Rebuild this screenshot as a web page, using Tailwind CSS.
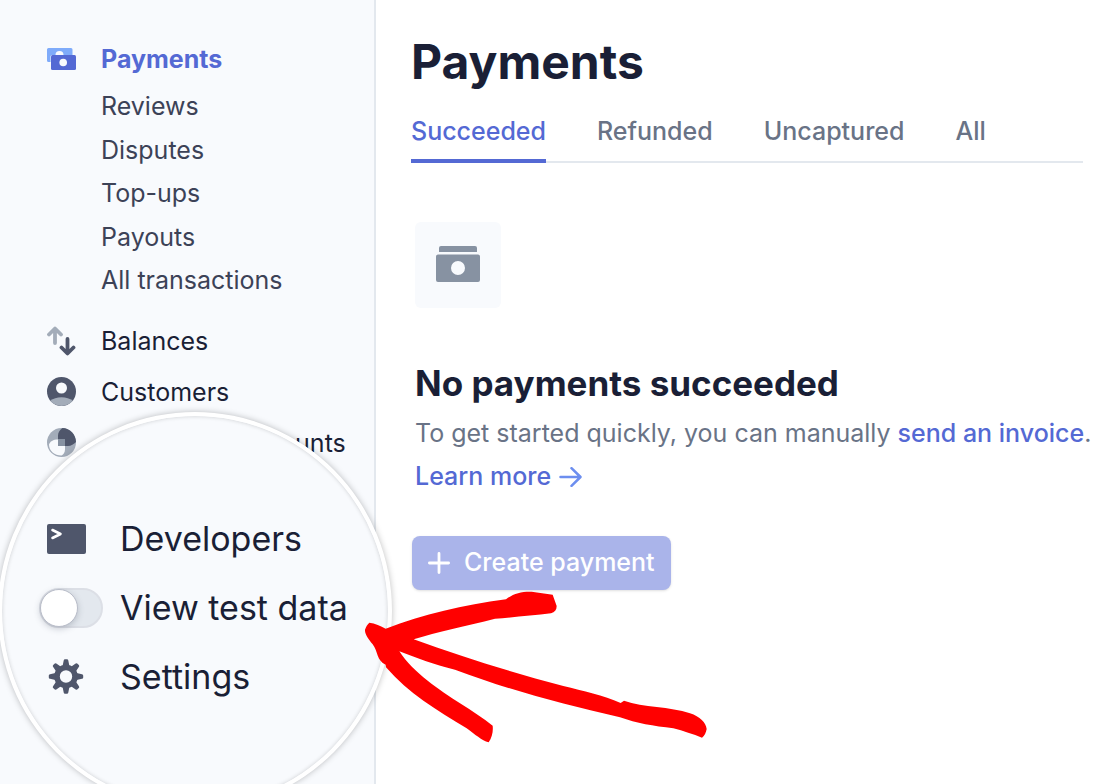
<!DOCTYPE html>
<html lang="en">
<head>
<meta charset="utf-8">
<meta name="viewport" content="width=device-width, initial-scale=1">
<title>Payments</title>
<script src="https://cdn.jsdelivr.net/npm/@tailwindcss/browser@4"></script>
</head>
<body class="relative flex min-h-screen overflow-hidden bg-white font-['Inter',sans-serif] text-[25px] text-[#1a1f36]">

<aside class="w-[376px] shrink-0 border-r-2 border-[#e3e8ee] bg-[#f8fafd] pt-[33px] pl-[47px]">
  <nav aria-label="Main">
    <a href="#" class="flex h-[52px] items-center gap-6 font-bold text-[#5469d4]">
      <svg class="h-[29px] w-[30px]" viewBox="0 0 30 29" aria-hidden="true">
        <path fill="#7fabfa" d="M1.500 3H24a1.500 1.500 0 0 1 1.500 1.500V10H5a1.500 1.500 0 0 0-1.500 1.500V17h-2A1.500 1.500 0 0 1 0 15.500v-11A1.500 1.500 0 0 1 1.500 3z"/>
        <path fill="#f8fafd" d="M8.500 10a4 4 0 0 1 8 0z"/>
        <rect x="4" y="10" width="25" height="15" rx="1.500" fill="#5469d4"/>
        <circle cx="16.200" cy="17.500" r="3.800" fill="#f8fafd"/>
      </svg>
      <span class="pt-[2px]">Payments</span>
    </a>
    <div class="grid h-[218px] grid-rows-5 items-center pl-[54px] text-[#3c4257]">
      <a href="#">Reviews</a>
      <a href="#">Disputes</a>
      <a href="#">Top-ups</a>
      <a href="#">Payouts</a>
      <a href="#">All transactions</a>
    </div>
    <div class="mt-3 flex flex-col">
      <a href="#" class="flex h-[51px] items-center gap-6">
        <svg class="h-[30px] w-[30px]" viewBox="0 0 30 30" fill="none" stroke-width="3.800" stroke-linecap="round" stroke-linejoin="round" aria-hidden="true">
          <path stroke="#a3acb9" d="M8 17V3M2 8.500l6-6 6 6"/>
          <path stroke="#4f566b" d="M20.500 13v14M14.500 21.500l6 6 6-6"/>
        </svg>
        <span class="pt-[2px]">Balances</span>
      </a>
      <a href="#" class="flex h-[51px] items-center gap-6">
        <svg class="h-[30px] w-[30px]" viewBox="0 0 30 30" aria-hidden="true">
          <circle cx="14.500" cy="14.500" r="14.500" fill="#4f566b"/>
          <path fill="#a3acb9" d="M3.300 23.700C6 21.500 10 20.300 14.500 20.300S23 21.500 25.700 23.700A14.500 14.500 0 0 1 3.300 23.700z"/>
          <circle cx="14.500" cy="11" r="5.500" fill="#f8fafd"/>
        </svg>
        <span class="pt-[2px]">Customers</span>
      </a>
      <a href="#" class="flex h-[51px] items-center gap-6">
        <svg class="h-[30px] w-[30px]" viewBox="0 0 30 30" aria-hidden="true">
          <circle cx="14.500" cy="14.500" r="14.500" fill="#a3acb9"/>
          <path fill="#4f566b" d="M11 11V7.500c0-3 2-6 4.500-7.500C23 0 29 6.500 29 14c-2 2-5 4-8 4h-3v-7z"/>
          <path fill="#f8fafd" d="M2 16.500c1-3 4-5 9-5V18h7v3.500c0 3-2 5.500-3.500 6C7.500 27.500 2 23 2 16.500z"/>
          <path fill="#8792a2" d="M11 11h7v7h-7z"/>
        </svg>
        <span class="pt-[2px]">Connected accounts</span>
      </a>
    </div>
  </nav>
</aside>

<main class="min-w-0 flex-1 pt-8 pr-[33px] pl-[35px]">
  <h1 class="text-[48px] leading-[60px] font-bold">Payments</h1>
  <div role="tablist" class="mt-3 flex gap-[51px] border-b-2 border-[#e3e8ee] font-medium text-[#697386]">
    <button type="button" role="tab" aria-selected="true" class="-mb-[2px] h-[59px] border-b-4 border-[#5469d4] text-[#5469d4]">Succeeded</button>
    <button type="button" role="tab" aria-selected="false" class="-mb-[2px] h-[59px] border-b-4 border-transparent">Refunded</button>
    <button type="button" role="tab" aria-selected="false" class="-mb-[2px] h-[59px] border-b-4 border-transparent">Uncaptured</button>
    <button type="button" role="tab" aria-selected="false" class="-mb-[2px] h-[59px] border-b-4 border-transparent">All</button>
  </div>

  <section class="mt-[59px] pl-1">
    <div class="flex size-[86px] items-center justify-center rounded-md bg-[#f8fafd] pb-[2px]">
      <svg class="h-9 w-11" viewBox="0 0 44 36" fill="#8792a2" aria-hidden="true">
        <path d="M5 0h34a2 2 0 0 1 2 2v4H3V2a2 2 0 0 1 2-2z"/>
        <path fill-rule="evenodd" d="M2 8.500h40a2 2 0 0 1 2 2V34a2 2 0 0 1-2 2H2a2 2 0 0 1-2-2V10.500a2 2 0 0 1 2-2zM22 15a7 7 0 1 0 0 14 7 7 0 0 0 0-14z"/>
      </svg>
    </div>
    <h2 class="mt-[54px] text-[35px] leading-[42px] font-bold">No payments succeeded</h2>
    <p class="mt-2 leading-[43px] whitespace-nowrap text-[#697386]">To get started quickly, you can manually <a href="#" class="font-medium text-[#5469d4]">send an invoice</a>.</p>
    <a href="#" class="inline-flex items-center gap-2 leading-[43px] font-medium text-[#5469d4]">Learn more
      <svg class="h-5 w-[23px]" viewBox="0 0 23 20" fill="none" stroke="#6c8eef" stroke-width="2.500" stroke-linecap="round" stroke-linejoin="round" aria-hidden="true"><path d="M1.500 10H21M12.500 1.200l9 8.800-9 8.800"/></svg>
    </a>
  </section>
  <button type="button" class="mt-[38px] ml-px flex h-[54px] items-center gap-[14px] rounded-lg bg-[#aab4ea] px-4 font-medium text-white shadow-sm">
    <svg class="size-[22px]" viewBox="0 0 22 22" fill="none" stroke="currentColor" stroke-width="2.800" stroke-linecap="round" aria-hidden="true"><path d="M11 1.400v19.200M1.400 11h19.200"/></svg>
    Create payment
  </button>
</main>

<!-- Magnifier over the lower part of the sidebar -->
<div class="absolute top-[412px] -left-[2px] flex h-[398px] w-[394px] flex-col rounded-[50%] border-4 border-white bg-[#f8fafd] pt-[88px] pl-[37px] text-[34px] shadow-[0_0_6px_rgba(0,0,0,0.25),inset_0_0_4px_rgba(0,0,0,0.18)]">
  <a href="#" class="flex h-[69px] items-center gap-[17px]">
    <svg class="h-[30px] w-[64px]" viewBox="0 0 64 30" aria-hidden="true">
      <rect x="8" y="0" width="39" height="30" rx="2" fill="#4f566b"/>
      <path d="M13.500 6l8 4-8 4" fill="none" stroke="#fff" stroke-width="2.600" stroke-linecap="round" stroke-linejoin="round"/>
    </svg>
    Developers
  </a>
  <label class="flex h-[69px] items-center gap-[17px]">
    <input type="checkbox" role="switch" class="flex h-10 w-16 appearance-none items-center rounded-full border-2 border-[#dcdfe6] bg-[#e3e8ee] before:-ml-px before:size-[38px] before:rounded-full before:border before:border-[#b9bdc9] before:bg-white before:shadow-[0_2px_6px_rgba(60,66,87,0.25)]">
    View test data
  </label>
  <a href="#" class="flex h-[69px] items-center gap-[17px]">
    <svg class="h-[36px] w-[64px]" viewBox="0 0 64 36" aria-hidden="true">
      <g transform="translate(27 17.500)">
        <circle r="9" fill="none" stroke="#4f566b" stroke-width="5.600"/>
        <g fill="#4f566b">
          <path id="tooth" d="M-3.400-10.500l1.100-5.500a1.400 1.400 0 0 1 1.400-1.200H.9a1.400 1.400 0 0 1 1.400 1.200l1.100 5.500z"/>
          <use href="#tooth" transform="rotate(45)"/><use href="#tooth" transform="rotate(90)"/><use href="#tooth" transform="rotate(135)"/><use href="#tooth" transform="rotate(180)"/><use href="#tooth" transform="rotate(225)"/><use href="#tooth" transform="rotate(270)"/><use href="#tooth" transform="rotate(315)"/>
        </g>
      </g>
    </svg>
    Settings
  </a>
</div>

<!-- Hand-drawn arrow pointing at the test data switch -->
<svg class="pointer-events-none absolute top-[580px] left-[350px] h-[170px] w-[370px]" viewBox="0 0 1110 510" fill="#f00" aria-hidden="true">
  <path d="M58 128C75 130 92 137 107 146C220 103 340 75 468 58C490 40 515 34 545 35L608 44L620 78C620 90 614 97 603 100C550 106 490 112 435 116C350 138 260 155 191 178C330 229 480 276 640 318C700 333 760 345 812 369L822 362C880 384 960 378 1020 400C1050 410 1068 428 1070 447C1068 458 1064 467 1056 473C1030 463 1000 453 970 445C910 438 860 430 810 412C640 373 480 331 315 269C255 255 200 234 148 214C190 279 270 331 330 370C365 392 400 415 428 437C430 455 426 472 416 487C395 482 375 463 350 445C260 390 175 340 108 262L107 254C80 243 84 214 68 193C55 177 44 163 45 149C48 140 52 133 58 128z"/>
</svg>
</body>
</html>
